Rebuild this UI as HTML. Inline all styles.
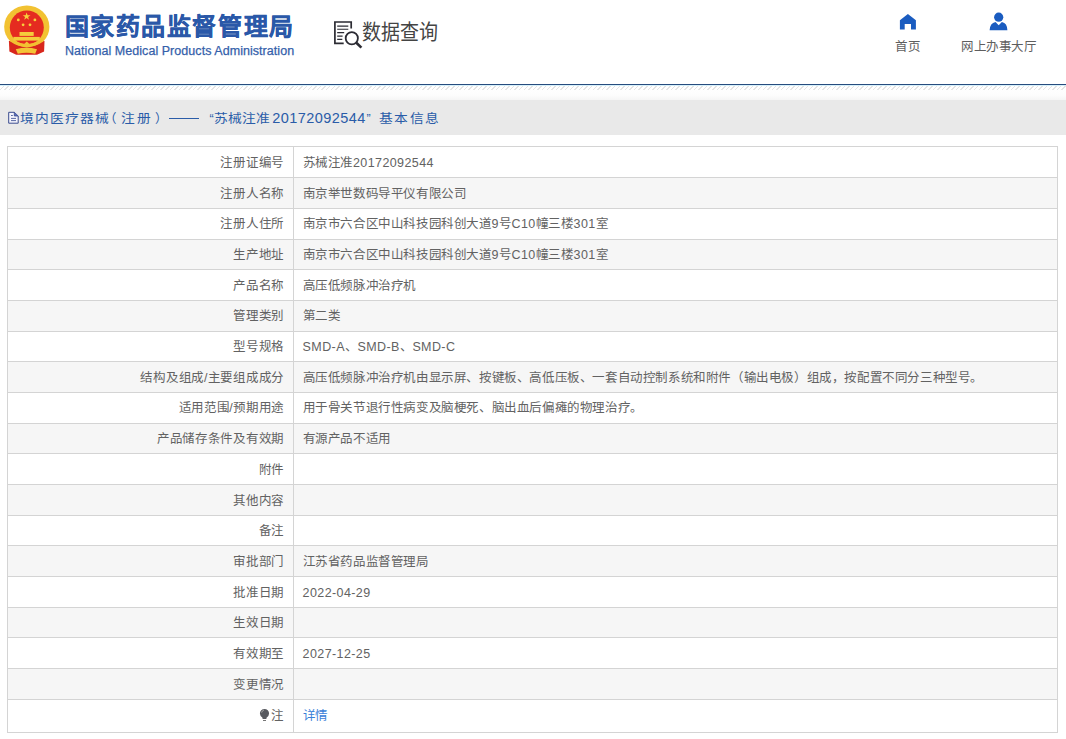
<!DOCTYPE html>
<html lang="zh-CN">
<head>
<meta charset="utf-8">
<style>
*{margin:0;padding:0;box-sizing:border-box;}
html,body{width:1066px;height:739px;overflow:hidden;background:#fff;}
body{font-family:"Liberation Sans",sans-serif;color:#555;position:relative;}
.abs{position:absolute;white-space:nowrap;}
#title{left:64.5px;top:11.7px;font-size:24px;letter-spacing:1.6px;font-weight:bold;-webkit-text-stroke:0.35px #2a58a8;color:#2a58a8;line-height:30px;}
#eng{left:65px;top:42.6px;font-size:12.5px;letter-spacing:0.05px;color:#3460aa;-webkit-text-stroke:0.25px #3460aa;line-height:16px;}
#qtext{left:362px;top:18.2px;font-size:20px;color:#444;line-height:26px;transform:scale(0.95,1.05);transform-origin:0 0;}
.nav{font-size:12.5px;letter-spacing:-0.4px;color:#5e5e5e;line-height:16px;top:39px;}
#line{left:0;top:84px;width:1066px;height:1px;background:#274c7e;}
#line2{left:0;top:85px;width:1066px;height:1px;background:#d6f0fa;}
#hatch{left:0;top:86px;width:1066px;height:4px;background:repeating-linear-gradient(135deg,rgba(255,255,255,0) 0,rgba(255,255,255,0) 2.2px,#e5e5e5 2.2px,#e5e5e5 3.25px);}
#grad{left:0;top:90px;width:1066px;height:10px;background:linear-gradient(#fefefe 0%,#fcfcfc 55%,#f5f5f5 100%);}
#bar{left:0;top:100px;width:1066px;height:35px;background:#e9e9e9;}
.bt{top:104.3px;font-size:12.5px;color:#2a5ca8;line-height:30px;}
.lab{right:782.0px;font-size:12.5px;letter-spacing:-0.3px;line-height:20px;color:#626262;}
.val{left:302.6px;font-size:12.5px;letter-spacing:-0.4px;line-height:20px;color:#626262;}
.d{letter-spacing:0.4px;}
.link{color:#3a80d8;}
.bulb{display:inline-block;width:9px;height:11px;}
</style>
</head>
<body>
<svg class="abs" style="left:0;top:0;width:60px;height:60px;" viewBox="0 0 60 60">
  <path d="M8.9 41 L44.5 41 L44.1 51.6 L37 54.7 L16.2 54.7 L9.4 51.6 Z" fill="#d8271d"/>
  <path d="M10.3 41.6 A22.6 21.5 0 1 1 43.3 41.6 Q36 46.8 26.8 47.4 Q17.6 46.8 10.3 41.6 Z" fill="#f2c232"/>
  <circle cx="26.8" cy="27.4" r="17" fill="#e52b20"/>
  <path d="M10.6 38.6 Q17.6 45.6 24.8 45.2 L26.8 43.4 L28.8 45.2 Q36 45.6 43 38.6" fill="none" stroke="#f2c232" stroke-width="2.8"/>
  <path d="M15.8 49.2 Q26.6 46.4 37 49.2 L35.2 53.8 Q26.6 51.8 17.8 53.8 Z" fill="#f4c537"/>
  <rect x="19.5" y="32" width="14.2" height="3.9" fill="#f5cc3c"/>
  <rect x="13.4" y="36.9" width="26.4" height="3.7" fill="#f5cc3c"/>
  <g fill="#f7d03c">
    <path d="M26.6 12.4 L27.6 15.2 L30.5 15.2 L28.1 16.9 L29 19.7 L26.6 18 L24.2 19.7 L25.1 16.9 L22.7 15.2 L25.6 15.2Z"/>
    <circle cx="18.3" cy="19.9" r="1.4"/><circle cx="34.9" cy="19.9" r="1.4"/>
    <circle cx="23.1" cy="24.8" r="1.4"/><circle cx="30" cy="24.8" r="1.4"/>
  </g>
</svg>
<div id="title" class="abs">国家药品监督管理局</div>
<div id="eng" class="abs">National Medical Products Administration</div>
<svg class="abs" style="left:328px;top:15px;width:40px;height:40px;" viewBox="0 0 40 40">
  <path d="M23.2 13.5 V7 H6.9 V28.4 H15.7" fill="none" stroke="#2b2b33" stroke-width="1.7"/>
  <g stroke="#2b2b33" stroke-width="1.1">
    <path d="M9.2 11.1 H20.3 M9.2 14.3 H20.3 M9.2 17.6 H16.2 M9.2 21.1 H14.6 M9.2 24.4 H14.3"/>
  </g>
  <circle cx="23.8" cy="23.3" r="6.1" fill="none" stroke="#2b2b33" stroke-width="1.8"/>
  <path d="M28.3 27.7 L33.4 32.6" stroke="#2b2b33" stroke-width="2.6"/>
</svg>
<div id="qtext" class="abs">数据查询</div>
<svg class="abs" style="left:0;top:0.4px;width:1066px;height:40px;" viewBox="0 0 1066 40">
  <path d="M907.9 13.9 L899.9 20.3 V29.6 H904.7 V24 H911 V29.6 H915.9 V20.3 Z" fill="#1a5cc0"/>
  <circle cx="998.7" cy="17.2" r="4.6" fill="#1a5cc0"/>
  <path d="M989.6 30.3 Q990 23 995.5 22 L998.7 25.2 L1001.9 22 Q1007.2 23 1007.4 30.3 Z" fill="#1a5cc0"/>
</svg>
<div class="abs nav" style="left:895px;">首页</div>
<div class="abs nav" style="left:961px;">网上办事大厅</div>
<div id="line" class="abs"></div>
<div id="line2" class="abs"></div>
<div id="hatch" class="abs"></div>
<div id="grad" class="abs"></div>
<div id="bar" class="abs"></div>
<svg class="abs" style="left:0;top:100px;width:30px;height:35px;" viewBox="0 0 30 35"><path d="M8.7 12.3 H14.3 L18.2 16 V23.2 H8.7 Z" fill="#f4f4fc" stroke="#3b4c8e" stroke-width="1"/><path d="M14.3 12.3 V16 H18.2" fill="#5a6cb8" stroke="#3b4c8e" stroke-width="0.8"/><path d="M11 15.5 H12.8 M11 18.4 H16 M11 20.6 H16" stroke="#4a5a9a" stroke-width="0.9"/></svg>
<div class="abs bt" style="left:20.4px;letter-spacing:0.7px;transform:scaleX(1.1);transform-origin:0 0;">境内医疗器械</div>
<div class="abs bt" style="left:104.0px;letter-spacing:0px;">（</div>
<div class="abs bt" style="left:120.7px;letter-spacing:1.2px;transform:scaleX(1.1);transform-origin:0 0;">注册</div>
<div class="abs bt" style="left:155.2px;letter-spacing:0px;">）</div>
<div class="abs bt" style="left:209.4px;letter-spacing:0px;">“</div>
<div class="abs bt" style="left:214.0px;letter-spacing:-0.27px;transform:scaleX(1.1);transform-origin:0 0;">苏械注准</div>
<div class="abs bt" style="left:272.2px;letter-spacing:0.43px;font-size:14.5px;top:102.8px;">20172092544</div>
<div class="abs bt" style="left:366.4px;letter-spacing:0px;">”</div>
<div class="abs bt" style="left:378.8px;letter-spacing:0.93px;transform:scaleX(1.1);transform-origin:0 0;">基本信息</div>
<div class="abs" style="left:169.2px;top:118px;width:30px;height:1px;background:#2a5ca8;"></div>
<div class="abs" style="left:7px;top:146px;width:1051px;height:587px;border:1px solid #d4d4d4;"></div>
<div class="abs lab" style="top:153.1px;">注册证编号</div>
<div class="abs val" style="top:153.1px;">苏械注准<span class="d">20172092544</span></div>
<div class="abs" style="left:8px;top:178px;width:1049px;height:30px;background:#f6f6f6;"></div>
<div class="abs" style="left:8px;top:177px;width:1049px;height:1px;background:#d4d4d4;"></div>
<div class="abs lab" style="top:184.1px;">注册人名称</div>
<div class="abs val" style="top:184.1px;">南京举世数码导平仪有限公司</div>
<div class="abs" style="left:8px;top:208px;width:1049px;height:1px;background:#d4d4d4;"></div>
<div class="abs lab" style="top:214.1px;">注册人住所</div>
<div class="abs val" style="top:214.1px;">南京市六合区中山科技园科创大道<span class="d">9</span>号<span class="d">C10</span>幢三楼<span class="d">301</span>室</div>
<div class="abs" style="left:8px;top:240px;width:1049px;height:29px;background:#f6f6f6;"></div>
<div class="abs" style="left:8px;top:239px;width:1049px;height:1px;background:#d4d4d4;"></div>
<div class="abs lab" style="top:244.6px;">生产地址</div>
<div class="abs val" style="top:244.6px;">南京市六合区中山科技园科创大道<span class="d">9</span>号<span class="d">C10</span>幢三楼<span class="d">301</span>室</div>
<div class="abs" style="left:8px;top:269px;width:1049px;height:1px;background:#d4d4d4;"></div>
<div class="abs lab" style="top:276.1px;">产品名称</div>
<div class="abs val" style="top:276.1px;">高压低频脉冲治疗机</div>
<div class="abs" style="left:8px;top:301px;width:1049px;height:30px;background:#f6f6f6;"></div>
<div class="abs" style="left:8px;top:300px;width:1049px;height:1px;background:#d4d4d4;"></div>
<div class="abs lab" style="top:306.1px;">管理类别</div>
<div class="abs val" style="top:306.1px;">第二类</div>
<div class="abs" style="left:8px;top:331px;width:1049px;height:1px;background:#d4d4d4;"></div>
<div class="abs lab" style="top:336.6px;">型号规格</div>
<div class="abs val" style="top:336.6px;"><span class="d">SMD-A</span>、<span class="d">SMD-B</span>、<span class="d">SMD-C</span></div>
<div class="abs" style="left:8px;top:362px;width:1049px;height:30px;background:#f6f6f6;"></div>
<div class="abs" style="left:8px;top:361px;width:1049px;height:1px;background:#d4d4d4;"></div>
<div class="abs lab" style="top:368.1px;">结构及组成<span class="d">/</span>主要组成成分</div>
<div class="abs val" style="top:368.1px;">高压低频脉冲治疗机由显示屏、按键板、高低压板、一套自动控制系统和附件（输出电极）组成，按配置不同分三种型号。</div>
<div class="abs" style="left:8px;top:392px;width:1049px;height:1px;background:#d4d4d4;"></div>
<div class="abs lab" style="top:398.1px;">适用范围<span class="d">/</span>预期用途</div>
<div class="abs val" style="top:398.1px;">用于骨关节退行性病变及脑梗死、脑出血后偏瘫的物理治疗。</div>
<div class="abs" style="left:8px;top:424px;width:1049px;height:29px;background:#f6f6f6;"></div>
<div class="abs" style="left:8px;top:423px;width:1049px;height:1px;background:#d4d4d4;"></div>
<div class="abs lab" style="top:428.6px;">产品储存条件及有效期</div>
<div class="abs val" style="top:428.6px;">有源产品不适用</div>
<div class="abs" style="left:8px;top:453px;width:1049px;height:1px;background:#d4d4d4;"></div>
<div class="abs lab" style="top:460.1px;">附件</div>
<div class="abs" style="left:8px;top:485px;width:1049px;height:30px;background:#f6f6f6;"></div>
<div class="abs" style="left:8px;top:484px;width:1049px;height:1px;background:#d4d4d4;"></div>
<div class="abs lab" style="top:491.1px;">其他内容</div>
<div class="abs" style="left:8px;top:515px;width:1049px;height:1px;background:#d4d4d4;"></div>
<div class="abs lab" style="top:520.5px;">备注</div>
<div class="abs" style="left:8px;top:546px;width:1049px;height:30px;background:#f6f6f6;"></div>
<div class="abs" style="left:8px;top:545px;width:1049px;height:1px;background:#d4d4d4;"></div>
<div class="abs lab" style="top:552.0px;">审批部门</div>
<div class="abs val" style="top:552.0px;">江苏省药品监督管理局</div>
<div class="abs" style="left:8px;top:576px;width:1049px;height:1px;background:#d4d4d4;"></div>
<div class="abs lab" style="top:583.0px;">批准日期</div>
<div class="abs val" style="top:583.0px;"><span class="d">2022-04-29</span></div>
<div class="abs" style="left:8px;top:608px;width:1049px;height:29px;background:#f6f6f6;"></div>
<div class="abs" style="left:8px;top:607px;width:1049px;height:1px;background:#d4d4d4;"></div>
<div class="abs lab" style="top:612.5px;">生效日期</div>
<div class="abs" style="left:8px;top:637px;width:1049px;height:1px;background:#d4d4d4;"></div>
<div class="abs lab" style="top:644.0px;">有效期至</div>
<div class="abs val" style="top:644.0px;"><span class="d">2027-12-25</span></div>
<div class="abs" style="left:8px;top:669px;width:1049px;height:30px;background:#f6f6f6;"></div>
<div class="abs" style="left:8px;top:668px;width:1049px;height:1px;background:#d4d4d4;"></div>
<div class="abs lab" style="top:675.0px;">变更情况</div>
<div class="abs" style="left:8px;top:699px;width:1049px;height:1px;background:#d4d4d4;"></div>
<div class="abs lab" style="top:706.0px;">注</div>
<svg class="abs" style="left:255px;top:702px;width:20px;height:22px;" viewBox="255 702 20 22"><path d="M262.3 717.6 Q259.9 715.8 259.9 713.6 A4.6 4.6 0 0 1 269.1 713.6 Q269.1 715.8 266.7 717.6 L266.3 719 H262.7 Z" fill="#585a60"/><path d="M261.6 712.6 Q262 710.6 264 710" stroke="#aaa" stroke-width="0.9" fill="none"/><path d="M263 720.5 H266" stroke="#666" stroke-width="0.9"/></svg>
<div class="abs val link" style="top:706.0px;">详情</div>
<div class="abs" style="left:293px;top:146px;width:1px;height:586px;background:#d4d4d4;"></div>
</body>
</html>
